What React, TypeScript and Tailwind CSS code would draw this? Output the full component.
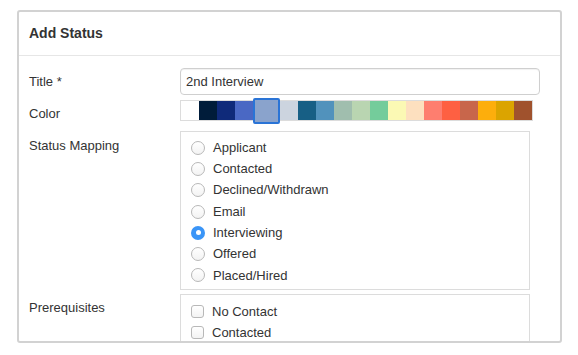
import React from "react";

const swatches = [
    "#ffffff", "#001c3a", "#0f2a7a", "#4a68c4", "#8aa3cc", "#ccd4df", "#175f85", "#5192bc",
    "#a0beae", "#b9d5b1", "#74cc9b", "#fbf9b4", "#fde0bf", "#fe7e6f", "#fe6042", "#c8664b",
    "#fdae0c", "#dba400", "#a0522d",
];

const statuses = ["Applicant", "Contacted", "Declined/Withdrawn", "Email", "Interviewing", "Offered", "Placed/Hired"];

const Radio = ({ checked }: { checked?: boolean }) =>
    checked ? (
        <span className="w-[14px] h-[14px] rounded-full bg-[#3a95f7] flex items-center justify-center shrink-0">
            <span className="w-[5px] h-[5px] rounded-full bg-white" />
        </span>
    ) : (
        <span className="w-[14px] h-[14px] rounded-full border border-[#b8b8b8] bg-gradient-to-b from-white to-[#f3f3f3] shrink-0" />
    );

const Checkbox = () => (
    <span className="w-[13px] h-[13px] rounded-[3px] border border-[#b8b8b8] bg-gradient-to-b from-white to-[#f3f3f3] shrink-0" />
);

export default function App() {
    return (
        <div className="w-[578px] h-[355px] bg-white pt-[10px] pl-[17px] pr-[16px] text-[13px] text-[#333] font-['Liberation_Sans',Arial,sans-serif]">
            <div className="h-[333px] border-2 border-[#d2d2d2] rounded-[3px] overflow-hidden flex flex-col">
                <div className="h-[44px] shrink-0 border-b border-[#e6e6e6] px-[10px] flex items-center">
                    <span className="text-[14px] font-bold text-[#333]">Add Status</span>
                </div>
                <div className="pl-[10px] pt-[12px]">
                    {/* Title */}
                    <div className="flex">
                        <div className="w-[151px] leading-[27px]">Title *</div>
                        <div className="w-[360px] h-[27px] border border-[#cfcfcf] rounded-[4px] px-[5px] leading-[25px] shadow-[inset_0_1px_1px_rgba(0,0,0,0.06)]">
                            2nd Interview
                        </div>
                    </div>
                    {/* Color */}
                    <div className="flex mt-[5px]">
                        <div className="w-[151px] pt-[6px] leading-[16px]">Color</div>
                        <div className="flex h-[21px] border border-[#dcdcdc]">
                            {swatches.map((c, i) =>
                                i === 4 ? (
                                    <div
                                        key={i}
                                        className="w-[27px] h-[26px] -my-[3px] border-2 border-[#2a74d6] rounded-[2px]"
                                        style={{ backgroundColor: c }}
                                    />
                                ) : (
                                    <div key={i} className="w-[18px] h-full" style={{ backgroundColor: c }} />
                                )
                            )}
                        </div>
                    </div>
                    {/* Status Mapping */}
                    <div className="flex mt-[9px]">
                        <div className="w-[151px] pt-[7px] leading-[16px]">Status Mapping</div>
                        <div className="w-[350px] h-[159px] border border-[#dcdcdc] pt-[5px] pl-[10px]">
                            {statuses.map((s) => (
                                <div key={s} className="h-[21.3px] flex items-center gap-[8px]">
                                    <Radio checked={s === "Interviewing"} />
                                    <span>{s}</span>
                                </div>
                            ))}
                        </div>
                    </div>
                    {/* Prerequisites */}
                    <div className="flex mt-[4px]">
                        <div className="w-[151px] pt-[6px] leading-[16px]">Prerequisites</div>
                        <div className="w-[350px] h-[80px] border border-[#dcdcdc] pt-[6px] pl-[10px]">
                            {["No Contact", "Contacted"].map((s) => (
                                <div key={s} className="h-[21px] flex items-center gap-[8px]">
                                    <Checkbox />
                                    <span>{s}</span>
                                </div>
                            ))}
                        </div>
                    </div>
                </div>
            </div>
        </div>
    );
}
